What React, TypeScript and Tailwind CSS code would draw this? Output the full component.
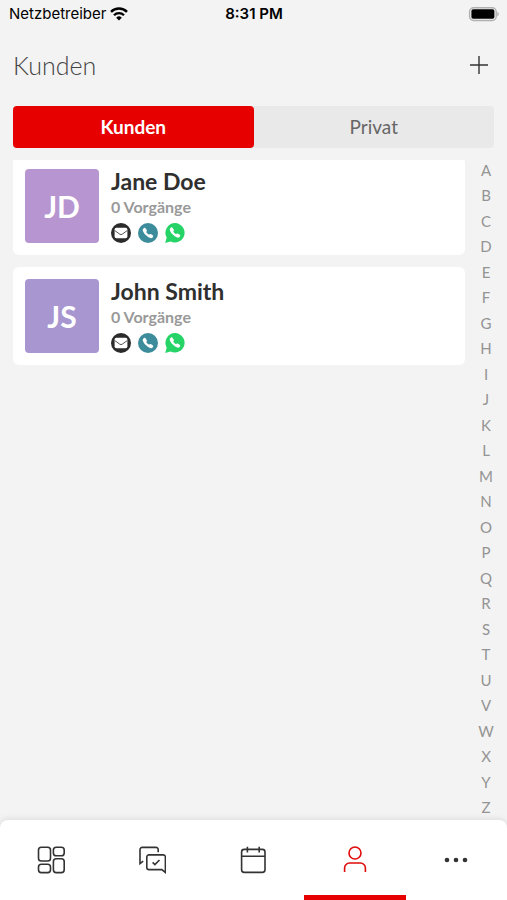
import React, { useState } from 'react';
import clsx from 'clsx';
import { IoCall } from 'react-icons/io5';

interface Customer {
  name: string;
  initials: string;
  cases: number;
  color: string;
}

const customers: Customer[] = [
  { name: 'Jane Doe', initials: 'JD', cases: 0, color: 'bg-[#b695d1]' },
  { name: 'John Smith', initials: 'JS', cases: 0, color: 'bg-[#a896d0]' },
];

const alphabet = 'ABCDEFGHIJKLMNOPQRSTUVWXYZ'.split('');

const StatusBar: React.FC = () => (
  <div className="grid h-7 grid-cols-[1fr_auto_1fr] items-center pr-2 pl-[9px] font-['Inter',sans-serif] text-[15px] leading-5 text-black">
    <div className="flex items-center gap-1">
      <span>Netzbetreiber</span>
      <svg viewBox="0 0 18 14" className="h-3.5 w-[18px]" fill="none" stroke="currentColor" aria-hidden="true">
        <path d="M1 4.9a11.4 11.4 0 0 1 16 0" strokeWidth="2.5" />
        <path d="M4 8.2a7.1 7.1 0 0 1 10 0" strokeWidth="2.3" />
        <path d="M9 13.6 6.2 10.7a4 4 0 0 1 5.6 0Z" fill="currentColor" stroke="none" />
      </svg>
    </div>
    <span className="font-semibold">8:31 PM</span>
    <svg viewBox="0 0 31 15" className="h-[15px] w-[31px] justify-self-end" aria-hidden="true">
      <rect x="1.6" y="0.7" width="26.6" height="12.8" rx="4" fill="#f3f3f3" stroke="#b0b0b0" strokeWidth="1.4" />
      <rect x="3.4" y="2.3" width="23" height="9.4" rx="1.8" fill="#000" />
      <path d="M29.3 4.8v4.6c1-.4 1.5-1.3 1.5-2.3s-.5-1.9-1.5-2.3Z" fill="#b0b0b0" />
    </svg>
  </div>
);

const MailIcon: React.FC = () => (
  <svg viewBox="0 0 20 20" className="size-5" aria-hidden="true">
    <circle cx="10" cy="10" r="10" fill="#2b2b2b" />
    <rect x="3.6" y="4.8" width="12.8" height="10.4" rx="1.8" fill="#fff" />
    <path d="m3.8 7.6 5 3.6a2.2 2.2 0 0 0 2.4 0l5-3.6" fill="none" stroke="#2b2b2b" strokeWidth="0.8" />
  </svg>
);

const WhatsappIcon: React.FC = () => (
  <svg viewBox="0 0 20 20" className="size-5" aria-hidden="true">
    <path d="M10.2.1a9.7 9.7 0 0 0-8.5 14.5L.2 19.9l5.4-1.4A9.7 9.7 0 1 0 10.2.1Z" fill="#25d366" />
    <IoCall x="4" y="3.5" size={12} color="#fff" />
  </svg>
);

const CustomerCard: React.FC<{ customer: Customer }> = ({ customer }) => (
  <li className="flex gap-3 rounded-md bg-white p-3">
    <div
      className={clsx(
        'flex size-[74px] shrink-0 items-center justify-center rounded text-3xl font-bold text-white',
        customer.color
      )}
    >
      {customer.initials}
    </div>
    <div className="flex flex-col">
      <h2 className="text-[23px] leading-6 font-bold text-[#2f2f2f]">{customer.name}</h2>
      <p className="mt-1 text-base leading-5 font-bold text-[#999]">{customer.cases} Vorgänge</p>
      <div className="mt-1.5 flex gap-[7px]">
        <button type="button" aria-label="E-Mail">
          <MailIcon />
        </button>
        <button
          type="button"
          aria-label="Anrufen"
          className="flex size-5 items-center justify-center rounded-full bg-[#3d8c9b] text-white"
        >
          <IoCall className="size-3" />
        </button>
        <button type="button" aria-label="WhatsApp">
          <WhatsappIcon />
        </button>
      </div>
    </div>
  </li>
);

const AlphabetIndex: React.FC = () => (
  <nav aria-label="Alphabet" className="flex w-[42px] flex-col">
    {alphabet.map(letter => (
      <a
        key={letter}
        href={`#${letter}`}
        className="flex flex-1 items-center justify-center text-[15px] leading-5 text-[#949494]"
      >
        {letter}
      </a>
    ))}
  </nav>
);

const navIcons: { id: string; label: string; icon: React.ReactNode }[] = [
  {
    id: 'dashboard',
    label: 'Übersicht',
    icon: (
      <>
        <rect x="1.5" y="1.3" width="12" height="13.7" rx="2.8" />
        <rect x="16.4" y="1.3" width="10.8" height="8.4" rx="2.8" />
        <rect x="1.5" y="18.2" width="12" height="8.4" rx="2.8" />
        <rect x="16.4" y="12.8" width="10.8" height="13.8" rx="2.8" />
      </>
    ),
  },
  {
    id: 'chats',
    label: 'Nachrichten',
    icon: (
      <>
        <path d="M20.2 6.200V3.600a2.200 2.200 0 0 0-2.200-2.200H4.200A2.200 2.200 0 0 0 2 3.600v14l3.200-2.400" />
        <path d="M11 8.900h14.200a2.200 2.200 0 0 1 2.200 2.200v15.300l-3.600-2.800H11a2.200 2.200 0 0 1-2.200-2.200V11.100A2.200 2.200 0 0 1 11 8.900Z" />
        <path d="m14.600 16.400 2.300 2.200 4.600-4.600" />
      </>
    ),
  },
  {
    id: 'calendar',
    label: 'Kalender',
    icon: (
      <>
        <rect x="2.6" y="3.4" width="23.4" height="23" rx="2.6" />
        <path d="M2.600 10.200h23.400M8.400.8v5.800M20.200.8v5.800" />
      </>
    ),
  },
  {
    id: 'customers',
    label: 'Kunden',
    icon: (
      <>
        <circle cx="14" cy="7" r="6" />
        <path d="M3.600 26v-4a5 5 0 0 1 5-5h10.800a5 5 0 0 1 5 5v4" />
      </>
    ),
  },
  {
    id: 'more',
    label: 'Mehr',
    icon: (
      <g fill="currentColor" stroke="none">
        <circle cx="5" cy="14" r="2.3" />
        <circle cx="14" cy="14" r="2.3" />
        <circle cx="23" cy="14" r="2.3" />
      </g>
    ),
  },
];

const BottomNav: React.FC = () => {
  const [active, setActive] = useState('customers');

  return (
    <nav className="grid h-20 shrink-0 grid-cols-5 rounded-t-lg bg-white shadow-[0_-1px_6px_rgba(0,0,0,0.1)]">
      {navIcons.map(item => (
        <button
          key={item.id}
          type="button"
          aria-label={item.label}
          onClick={() => setActive(item.id)}
          className={clsx(
            'flex items-center justify-center border-y-5 border-t-transparent',
            active === item.id ? 'border-b-[#e60000] text-[#e00a0a]' : 'border-b-transparent text-[#333]'
          )}
        >
          <svg viewBox="0 0 28 28" className="size-7" fill="none" stroke="currentColor" strokeWidth="1.6" aria-hidden="true">
            {item.icon}
          </svg>
        </button>
      ))}
    </nav>
  );
};

export default function App() {
  const [tab, setTab] = useState('Kunden');

  return (
    <div className="flex h-screen flex-col bg-[#f3f3f3] font-['Lato',sans-serif]">
      <StatusBar />

      {/* Header */}
      <header className="flex h-[78px] items-center justify-between pr-3 pb-1 pl-[13px]">
        <h1 className="text-[25px] leading-8 font-light text-[#444]">Kunden</h1>
        <button type="button" aria-label="Kunde hinzufügen" className="flex size-8 items-center justify-center">
          <svg viewBox="0 0 18 18" className="size-[18px]" stroke="#333" strokeWidth="1.4" aria-hidden="true">
            <path d="M9 0v18M0 9h18" />
          </svg>
        </button>
      </header>

      {/* Tabs */}
      <div className="mx-[13px] mb-3 grid h-[42px] shrink-0 grid-cols-2 rounded bg-[#e9e9e9]">
        {['Kunden', 'Privat'].map(label => (
          <button
            key={label}
            type="button"
            aria-pressed={tab === label}
            onClick={() => setTab(label)}
            className={clsx(
              'rounded text-[19px] leading-6',
              tab === label ? 'bg-[#e60000] font-bold text-white' : 'text-[#666]'
            )}
          >
            {label}
          </button>
        ))}
      </div>

      {/* Customer list */}
      <main className="flex min-h-0 flex-1 flex-col overflow-hidden">
        <div className="-mt-[3px] flex flex-1 pl-[13px]">
          <ul className="flex flex-1 flex-col gap-3">
            {customers.map(customer => (
              <CustomerCard key={customer.name} customer={customer} />
            ))}
          </ul>
          <AlphabetIndex />
        </div>
      </main>

      <BottomNav />
    </div>
  );
}
